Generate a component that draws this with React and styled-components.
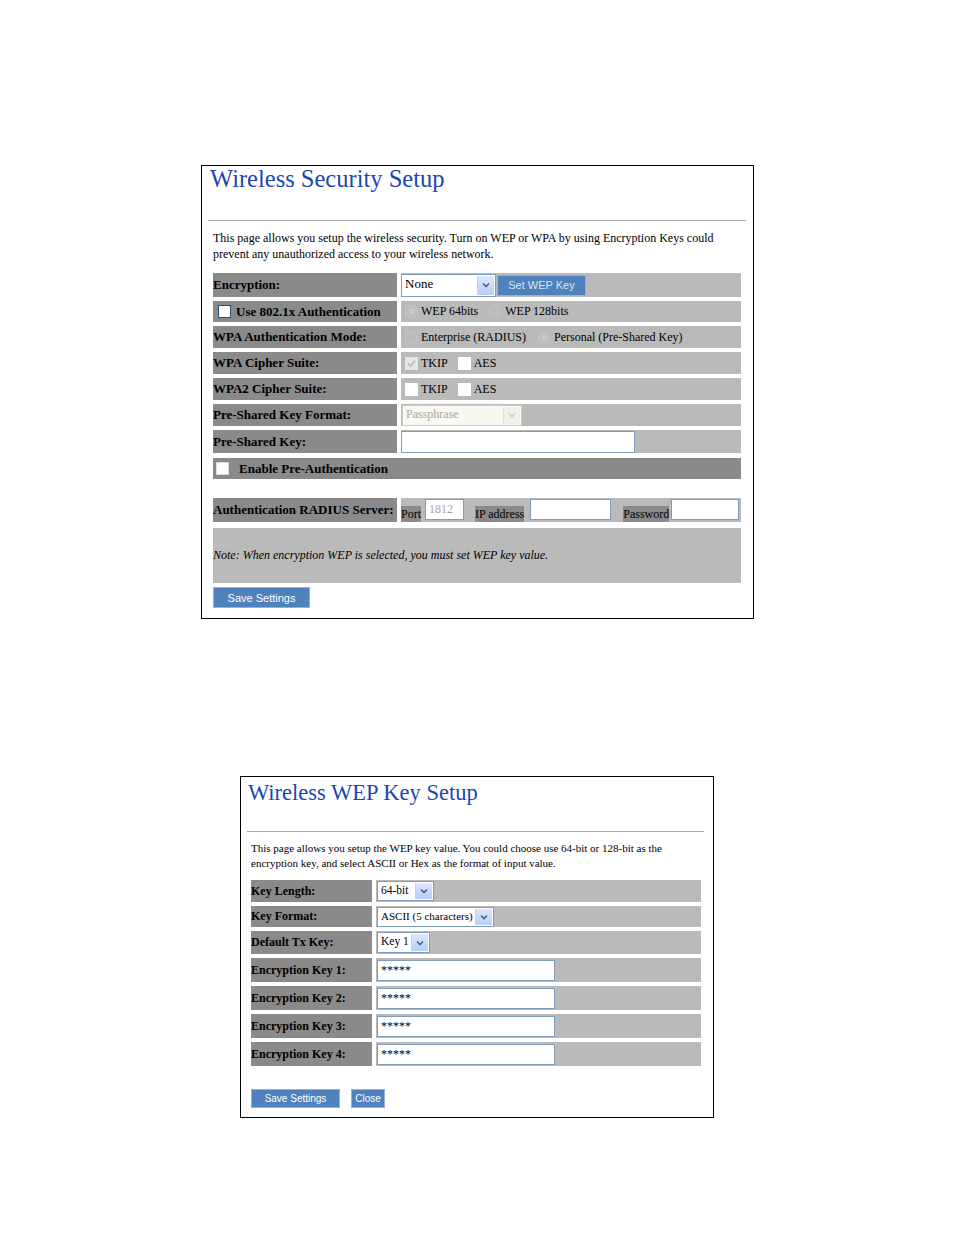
import styled, { createGlobalStyle } from 'styled-components';

const GlobalStyle = createGlobalStyle`
    html, body {
        margin: 0;
        padding: 0;
        background: #ffffff;
    }
    body {
        font-family: 'Liberation Serif', 'Times New Roman', serif;
        color: #000;
    }
`

const Page = styled.div`
    width: 954px;
    min-height: 1235px;
    padding-top: 165px;
    box-sizing: border-box;
    display: flex;
    flex-direction: column;
`

const Panel = styled.div`
    box-sizing: border-box;
    width: ${p => p.$width}px;
    margin-left: ${p => p.$left}px;
    margin-top: ${p => p.$top || 0}px;
    border: 1px solid #000;
    padding-bottom: ${p => p.$bottom}px;
`

const Title = styled.h1`
    margin: 0;
    padding: ${p => p.$pad};
    font-family: 'Liberation Serif', 'Times New Roman', serif;
    font-weight: normal;
    font-size: ${p => p.$size}px;
    line-height: 24px;
    height: 24px;
    color: #1c46b4;
    white-space: nowrap;
`

const Rule = styled.div`
    height: 1px;
    background: #aaa79c;
    margin: ${p => p.$margin};
`

const Desc = styled.p`
    margin: ${p => p.$margin};
    font-size: ${p => p.$size}px;
    line-height: ${p => p.$lh}px;
`

const Form = styled.div`
    display: flex;
    flex-direction: column;
    gap: 4px;
    margin: ${p => p.$margin};
`

const Row = styled.div`
    display: grid;
    grid-template-columns: ${p => p.$labelW}px 1fr;
    column-gap: 4px;
    height: ${p => p.$h}px;
    margin-top: ${p => p.$mt || 0}px;
`

const Label = styled.div`
    background: #8a8a8a;
    display: flex;
    align-items: center;
    gap: 2px;
    font-weight: bold;
    font-size: ${p => p.$size || 13}px;
    padding-left: ${p => p.$pl || 0}px;
    white-space: nowrap;
`

const Value = styled.div`
    background: #bababa;
    display: flex;
    align-items: ${p => p.$align || 'center'};
    font-size: ${p => p.$size || 12}px;
    white-space: nowrap;
`

const WideRow = styled.div`
    height: ${p => p.$h}px;
    background: ${p => p.$dark ? '#8a8a8a' : '#bababa'};
    display: flex;
    align-items: center;
    gap: 7px;
    padding-left: ${p => p.$pl || 0}px;
    font-size: ${p => p.$size || 13}px;
    font-weight: ${p => p.$dark ? 'bold' : 'normal'};
    font-style: ${p => p.$italic ? 'italic' : 'normal'};
    margin-top: ${p => p.$mt || 0}px;
    white-space: nowrap;
`

const SelectBox = styled.div`
    box-sizing: border-box;
    display: flex;
    align-items: stretch;
    width: ${p => p.$w}px;
    height: ${p => p.$h || 21}px;
    background: ${p => p.$disabled ? '#f9f8f2' : '#fff'};
    border: 1px solid ${p => p.$disabled ? '#cfcdc1' : '#7f9db9'};
    color: ${p => p.$disabled ? '#a8a79c' : '#000'};
    font-size: ${p => p.$size || 13}px;
    margin-left: ${p => p.$ml || 0}px;
    span {
        flex: 1;
        padding: 1px 0 0 3px;
        line-height: 15px;
        overflow: hidden;
        white-space: nowrap;
    }
`

const Arrow = styled.div`
    flex: none;
    width: 16px;
    margin: 1px;
    display: flex;
    align-items: center;
    justify-content: center;
    background: ${p => p.$disabled ? '#efeee8' : 'linear-gradient(#dce8fe, #b7cdf7)'};
    border-left: 1px solid ${p => p.$disabled ? '#e3e2da' : '#c3d3f8'};
`

const Chevron = ({ disabled }) => (
    <svg width="8" height="6" viewBox="0 0 8 6">
        <path d="M1 1.5 L4 4.5 L7 1.5" fill="none" stroke={disabled ? '#c9c8c0' : '#4d6185'} strokeWidth="1.6" />
    </svg>
)

const Select = ({ w, text, disabled, size, ml, h }) => (
    <SelectBox $w={w} $disabled={disabled} $size={size} $ml={ml} $h={h}>
        <span>{text}</span>
        <Arrow $disabled={disabled}><Chevron disabled={disabled} /></Arrow>
    </SelectBox>
)

const Button = styled.button`
    box-sizing: border-box;
    height: ${p => p.$h || 21}px;
    padding: 0;
    width: ${p => p.$w}px;
    background: #4f81bd;
    border: 1px solid #8cb3e6;
    color: ${p => p.$dim ? '#dbe4ef' : '#ffffff'};
    font-family: 'Liberation Sans', Arial, sans-serif;
    font-size: ${p => p.$size || 11}px;
    white-space: nowrap;
    margin-left: ${p => p.$ml || 0}px;
    border-radius: 0;
`

const ButtonBar = styled.div`
    display: flex;
    gap: ${p => p.$gap || 0}px;
    margin: ${p => p.$margin};
`

const TextInput = styled.input`
    box-sizing: border-box;
    width: ${p => p.$w}px;
    height: ${p => p.$h || 21}px;
    border: 1px solid #7f9db9;
    background: #fff;
    font-family: 'Liberation Serif', 'Times New Roman', serif;
    font-size: ${p => p.$size || 13}px;
    color: ${p => p.$faint ? '#a9a89e' : '#000'};
    padding: 0 3px;
    margin-left: ${p => p.$ml || 0}px;
    outline: none;
    align-self: ${p => p.$top ? 'flex-start' : 'auto'};
    margin-top: ${p => p.$top ? '1px' : 0};
`

const Radio = styled.span`
    box-sizing: border-box;
    display: inline-block;
    width: 13px;
    height: 13px;
    border-radius: 50%;
    border: 1px solid #c6c6c6;
    background: ${p => p.$on ? 'radial-gradient(circle, #c9c9c9 0 3px, #bdbdbd 3px)' : '#bcbcbc'};
    margin: 0 3px 0 ${p => p.$ml || 4}px;
`

const Check = styled.span`
    box-sizing: border-box;
    flex: none;
    display: inline-flex;
    align-items: center;
    justify-content: center;
    width: 13px;
    height: 13px;
    background: ${p => p.$disabled ? '#e6e6e6' : '#fff'};
    border: 1px solid ${p => p.$border || 'transparent'};
    margin: 0 3px 0 ${p => p.$ml ?? 4}px;
`

const Tick = () => (
    <svg width="9" height="9" viewBox="0 0 9 9">
        <path d="M1 4.5 L3.5 7 L8 1.5" fill="none" stroke="#b8b8b8" strokeWidth="1.6" />
    </svg>
)

const InlineTag = styled.span`
    background: #8a8a8a;
    line-height: 16px;
    margin-left: ${p => p.$ml || 0}px;
    font-size: 12px;
`

const InlineGroup = styled.div`
    display: flex;
    align-items: flex-end;
    height: 100%;
`

const App = () => {
    const keys = [1, 2, 3, 4]
    return (
        <Page>
            <GlobalStyle />
            <Panel $width={553} $left={201} $bottom={10}>
                <Title $size={24.5} $pad="1px 0 0 8px">Wireless Security Setup</Title>
                <Rule $margin="29px 7px 0 6px" />
                <Desc $size={12} $lh={16} $margin="9px 0 0 11px">
                    This page allows you setup the wireless security. Turn on WEP or WPA by using Encryption Keys could<br />
                    prevent any unauthorized access to your wireless network.
                </Desc>
                <Form $margin="11px 12px 0 11px">
                    <Row $labelW={184} $h={24}>
                        <Label>Encryption:</Label>
                        <Value>
                            <Select w={95} h={23} text="None" />
                            <Button $w={89} $h={21} $dim $ml={1}>Set WEP Key</Button>
                        </Value>
                    </Row>
                    <Row $labelW={184} $h={21}>
                        <Label $pl={5}><Check $border="#1c5180" $ml={0} />Use 802.1x Authentication</Label>
                        <Value><Radio $on />WEP 64bits<Radio $ml={11} />WEP 128bits</Value>
                    </Row>
                    <Row $labelW={184} $h={22}>
                        <Label>WPA Authentication Mode:</Label>
                        <Value><Radio />Enterprise (RADIUS)<Radio $on $ml={12} />Personal (Pre-Shared Key)</Value>
                    </Row>
                    <Row $labelW={184} $h={22}>
                        <Label>WPA Cipher Suite:</Label>
                        <Value><Check $disabled><Tick /></Check>TKIP<Check $ml={10} />AES</Value>
                    </Row>
                    <Row $labelW={184} $h={22}>
                        <Label>WPA2 Cipher Suite:</Label>
                        <Value><Check />TKIP<Check $ml={10} />AES</Value>
                    </Row>
                    <Row $labelW={184} $h={22}>
                        <Label>Pre-Shared Key Format:</Label>
                        <Value><Select w={120} h={21} text="Passphrase" disabled ml={1} size={12} /></Value>
                    </Row>
                    <Row $labelW={184} $h={23}>
                        <Label>Pre-Shared Key:</Label>
                        <Value><TextInput $w={234} $h={22} /></Value>
                    </Row>
                    <WideRow $h={21} $dark $mt={1} $pl={3}>
                        <Check $ml={0} $border="#dcdcdc" />
                        Enable Pre-Authentication
                    </WideRow>
                    <Row $labelW={184} $h={24} $mt={15}>
                        <Label>Authentication RADIUS Server:</Label>
                        <Value $align="flex-start">
                            <InlineGroup>
                                <InlineTag>Port</InlineTag>
                                <TextInput $w={39} $h={21} $ml={4} $faint $size={12} $top defaultValue="1812" readOnly />
                                <InlineTag $ml={11}>IP address</InlineTag>
                                <TextInput $w={81} $h={21} $ml={6} $top />
                                <InlineTag $ml={12}>Password</InlineTag>
                                <TextInput $w={68} $h={21} $ml={2} $top />
                            </InlineGroup>
                        </Value>
                    </Row>
                    <WideRow $h={55} $italic $mt={2} $size={12}>
                        Note: When encryption WEP is selected, you must set WEP key value.
                    </WideRow>
                </Form>
                <ButtonBar $margin="4px 0 0 11px">
                    <Button $w={97} $h={21}>Save Settings</Button>
                </ButtonBar>
            </Panel>

            <Panel $width={474} $left={240} $top={157} $bottom={9}>
                <Title $size={22.5} $pad="4px 0 0 7px">Wireless WEP Key Setup</Title>
                <Rule $margin="26px 9px 0 6px" />
                <Desc $size={11} $lh={15} $margin="9px 0 0 10px">
                    This page allows you setup the WEP key value. You could choose use 64-bit or 128-bit as the<br />
                    encryption key, and select ASCII or Hex as the format of input value.
                </Desc>
                <Form $margin="9px 12px 0 10px">
                    <Row $labelW={121} $h={22}>
                        <Label $size={12}>Key Length:</Label>
                        <Value><Select w={57} h={20} text="64-bit" size={11.5} ml={1} /></Value>
                    </Row>
                    <Row $labelW={121} $h={21}>
                        <Label $size={12}>Key Format:</Label>
                        <Value><Select w={117} h={20} text="ASCII (5 characters)" size={11} ml={1} /></Value>
                    </Row>
                    <Row $labelW={121} $h={23}>
                        <Label $size={12}>Default Tx Key:</Label>
                        <Value><Select w={53} h={21} text="Key 1" size={11.5} ml={1} /></Value>
                    </Row>
                    {keys.map(k => (
                        <Row key={k} $labelW={121} $h={24}>
                            <Label $size={12}>Encryption Key {k}:</Label>
                            <Value><TextInput $w={178} $h={21} $ml={1} $size={12} defaultValue="*****" readOnly /></Value>
                        </Row>
                    ))}
                </Form>
                <ButtonBar $margin="23px 0 0 10px" $gap={11}>
                    <Button $w={89} $h={19} $size={10}>Save Settings</Button>
                    <Button $w={34} $h={19} $size={10}>Close</Button>
                </ButtonBar>
            </Panel>
        </Page>
    )
}

export default App;
